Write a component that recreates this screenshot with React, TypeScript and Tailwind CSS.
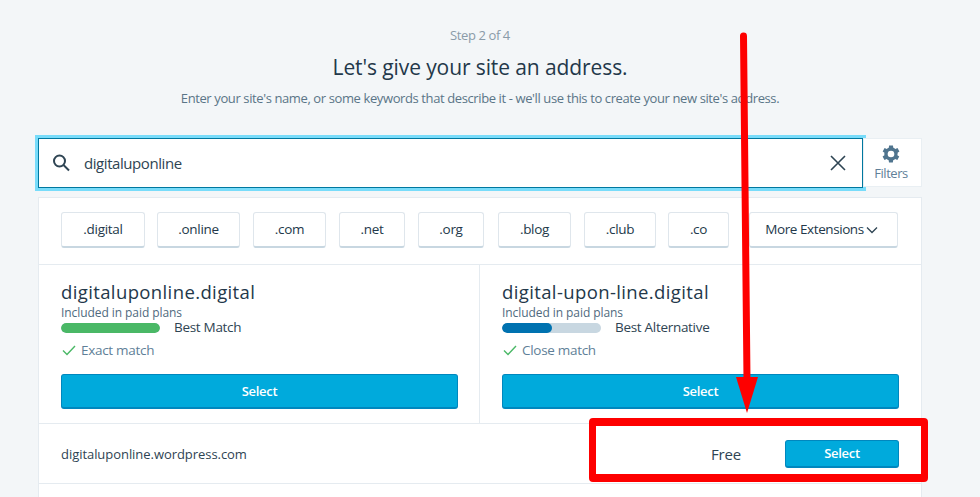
import React from "react";

const font = { fontFamily: '"Open Sans", "Noto Sans", sans-serif' };

const chips: [string, string][] = [
  [".digital", "w-[84px]"],
  [".online", "w-[83px] ml-[12px]"],
  [".com", "w-[73px] ml-[13px]"],
  [".net", "w-[66px] ml-[13px]"],
  [".org", "w-[66px] ml-[13px]"],
  [".blog", "w-[73px] ml-[14px]"],
  [".club", "w-[72px] ml-[13px]"],
  [".co", "w-[61px] ml-[12px]"],
];

function Chip({ label, cls }: { label: string; cls: string }) {
  return (
    <div className={`${cls} h-[36px] flex items-center justify-center bg-white rounded-[3px] border border-[#dfe6ec] border-b-2 border-b-[#c8d7e1] text-[13.5px] tracking-[-0.3px] text-[#23384a]`}>
      {label}
    </div>
  );
}

function Check() {
  return (
    <svg width="16" height="16" viewBox="0 0 16 16" fill="none" stroke="#4ab866" strokeWidth="1.4">
      <path d="M2 8.5 L6 12.5 L14 4" />
    </svg>
  );
}

function Suggestion({ name, bar, barColor, label, match, border }: { name: string; bar: string; barColor: string; label: string; match: string; border?: boolean }) {
  return (
    <div className={`flex-1 h-[158px] pl-[22px] pt-[15px] ${border ? "border-r border-[#e5ebf0] pr-[21px]" : "pr-[22px]"}`}>
      <div className="text-[18.5px] leading-[24px] tracking-[0.38px] text-[#23384a]">{name}</div>
      <div className="text-[12px] leading-[14px] mt-[2px] tracking-[-0.07px] text-[#4f6a7e]">Included in paid plans</div>
      <div className="flex items-center h-[14px] mt-[1px]">
        <div className="w-[99px] h-[10px] rounded-[5px] bg-[#c8d7e1] overflow-hidden">
          <div className={`h-full rounded-[5px] ${bar} ${barColor}`} />
        </div>
        <span className="ml-[14px] -mt-[2px] text-[13.5px] tracking-[-0.3px] text-[#2e4453]">{label}</span>
      </div>
      <div className="flex items-center mt-[4px] h-[22px] text-[13.5px] tracking-[-0.3px] text-[#5f7f98]">
        <Check />
        <span className="ml-[4px]">{match}</span>
      </div>
      <div className="mt-[13px] h-[35px] pt-[1px] rounded-[3px] bg-[#00aadc] border border-[#0087be] border-b-2 flex items-center justify-center text-white text-[13px] font-semibold tracking-[-0.3px]">
        Select
      </div>
    </div>
  );
}

export default function App() {
  return (
    <div style={font} className="relative w-[980px] h-[497px] overflow-hidden bg-[#f3f6f8]">
      <div className="pt-[27px] pr-[20px] text-center">
        <div className="text-[13px] leading-[17px] tracking-[-0.4px] text-[#8a9ba8]">Step 2 of 4</div>
        <h1 className="mt-[8px] text-[21px] leading-[30px] tracking-[-0.1px] text-[#23384a]">Let's give your site an address.</h1>
        <p className="mt-[8px] text-[13px] leading-[17px] tracking-[-0.39px] text-[#5a7587]">
          Enter your site's name, or some keywords that describe it - we'll use this to create your new site's address.
        </p>
      </div>

      <div className="flex mt-[31px] ml-[38px] w-[884px] h-[50px] items-start">
        <div className="w-[825px] h-[50px] flex items-center bg-white border border-[#00789f] shadow-[0_0_0_3px_#78dcfa]">
          <svg className="ml-[12px]" width="20" height="20" viewBox="0 0 20 20" fill="none" stroke="#2e4453" strokeWidth="2">
            <circle cx="8.5" cy="8" r="5.5" />
            <path d="M12.5 12 L18 17.5" />
          </svg>
          <span className="ml-[13px] text-[15px] tracking-[-0.43px] text-[#2e4453]">digitaluponline</span>
          <svg className="ml-auto mr-[16px]" width="16" height="16" viewBox="0 0 16 16" fill="none" stroke="#2e4453" strokeWidth="1.6">
            <path d="M1 1 L15 15 M15 1 L1 15" />
          </svg>
        </div>
        <div className="w-[59px] h-[49px] bg-white border border-[#e9eff3] flex flex-col items-center pt-[5px] pl-[1px] pr-[4px]">
          <svg width="20" height="20" viewBox="0 0 24 24" fill="#4f748e">
            <path fillRule="evenodd" d="M20 12c0-.5 0-1-.1-1.400l2.200-1.700-2.300-4-2.600 1c-.7-.6-1.500-1-2.400-1.400L14.300 1.800H9.700L9.300 4.500c-.9.400-1.700.8-2.400 1.400l-2.600-1-2.300 4 2.200 1.700C4 11 4 11.500 4 12s0 1 .1 1.400l-2.200 1.700 2.300 4 2.600-1c.7.600 1.500 1 2.400 1.400l.4 2.700h4.600l.4-2.700c.9-.4 1.700-.8 2.400-1.400l2.600 1 2.300-4-2.200-1.700c.1-.4.1-.9.1-1.400zM12 16a4 4 0 1 1 0-8 4 4 0 0 1 0 8z" />
          </svg>
          <span className="text-[13px] leading-[17px] mt-[1px] tracking-[-0.45px] text-[#5f7f98]">Filters</span>
        </div>
      </div>

      <div className="ml-[38px] mt-[9px] w-[884px] bg-white border border-[#e5ebf0] h-[400px]">
        <div className="flex pl-[22px] pt-[14px] h-[67px] border-b border-[#e5ebf0]">
          {chips.map(([l, c]) => (
            <Chip key={l} label={l} cls={c} />
          ))}
          <div className="ml-[20px] w-[149px] h-[36px] pr-[4px] flex items-center justify-center bg-white rounded-[3px] border border-[#dfe6ec] border-b-2 border-b-[#c8d7e1] text-[13.5px] tracking-[-0.42px] text-[#23384a]">
            More Extensions
            <svg className="ml-[2px]" width="12" height="12" viewBox="0 0 12 12" fill="none" stroke="#2e4453" strokeWidth="1.3">
              <path d="M1 3.500 L6 8.500 L11 3.500" />
            </svg>
          </div>
        </div>
        <div className="flex border-b border-[#e5ebf0]">
          <Suggestion border name="digitaluponline.digital" bar="w-full" barColor="bg-[#4ab866]" label="Best Match" match="Exact match" />
          <Suggestion name="digital-upon-line.digital" bar="w-1/2" barColor="bg-[#0072b0]" label="Best Alternative" match="Close match" />
        </div>
        <div className="flex items-center h-[60px] pl-[22px] pr-[22px] border-b border-[#e5ebf0]">
          <span className="mt-[2px] text-[13px] tracking-[-0.05px] text-[#2e4453]">digitaluponline.wordpress.com</span>
          <span className="ml-auto mt-[1px] text-[15px] font-medium text-[#2e4453] tracking-[-0.2px]">Free</span>
          <div className="ml-[44px] w-[114px] h-[28px] pt-[1px] rounded-[3px] bg-[#00aadc] border border-[#0087be] border-b-2 flex items-center justify-center text-white text-[13px] font-semibold tracking-[-0.3px]">
            Select
          </div>
        </div>
      </div>

      <div className="absolute left-[589px] top-[418px] w-[339px] h-[64px] border-[7px] border-y-[8px] border-[#fe0000] rounded-[4px]" />
      <svg className="absolute left-0 top-0" width="980" height="497" fill="none">
        <path d="M743.500 36 L747 380" stroke="#fe0000" strokeWidth="7" strokeLinecap="round" />
        <path d="M736 377 L758 377 L747 413 Z" fill="#fe0000" />
      </svg>
    </div>
  );
}
